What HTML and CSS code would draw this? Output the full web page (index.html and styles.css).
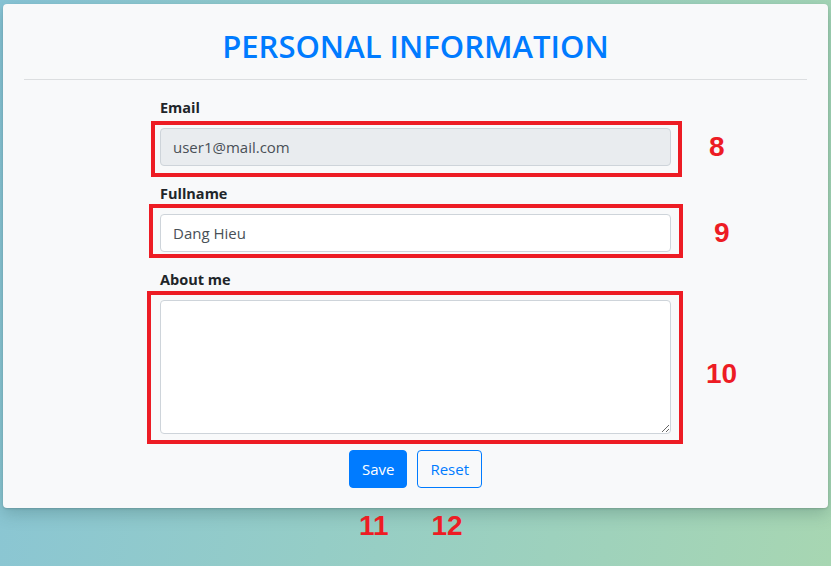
FILE: index.html
```html
<!DOCTYPE html>
<html lang="en">
<head>
<meta charset="utf-8">
<title>Personal Information</title>
<link rel="stylesheet" href="styles.css">
</head>
<body>
<div class="card">
  <h2 class="title">PERSONAL INFORMATION</h2>
  <hr class="divider">
  <form class="form">
    <div class="group">
      <label class="label" for="email">Email</label>
      <div class="field">
        <input id="email" class="control" type="text" value="user1@mail.com" readonly>
        <span class="mark mark-email"></span>
        <span class="num num-8">8</span>
      </div>
    </div>
    <div class="group">
      <label class="label" for="fullname">Fullname</label>
      <div class="field">
        <input id="fullname" class="control control-white" type="text" value="Dang Hieu">
        <span class="mark mark-name"></span>
        <span class="num num-9">9</span>
      </div>
    </div>
    <div class="group">
      <label class="label" for="about">About me</label>
      <div class="field">
        <textarea id="about" class="control control-white area"></textarea>
        <span class="mark mark-about"></span>
        <span class="num num-10">10</span>
      </div>
    </div>
    <div class="actions">
      <div class="btn-wrap">
        <button type="button" class="btn btn-primary">Save</button>
        <span class="num num-11">11</span>
      </div>
      <div class="btn-wrap">
        <button type="button" class="btn btn-outline">Reset</button>
        <span class="num num-12">12</span>
      </div>
    </div>
  </form>
</div>
</body>
</html>
```

FILE: styles.css
```css
* { box-sizing: border-box; }
html, body { height: 100%; }
body {
  margin: 0;
  padding: 4px 3px 0 3px;
  font-family: "Open Sans", "Noto Sans", sans-serif;
  background: linear-gradient(100deg, #88c4d6 0%, #95cdc6 45%, #a7d6b2 100%);
  overflow: hidden;
}
.card {
  width: 825px;
  background: #f8f9fa;
  border-radius: 4px;
  padding: 23px 21px 20px;
  box-shadow: 0 6px 16px rgba(40, 80, 80, 0.25), 0 1px 2px rgba(0,0,0,0.15);
}
.title {
  margin: 0;
  text-align: center;
  color: #007bff;
  font-family: "Open Sans", "Noto Sans", sans-serif;
  font-weight: 600;
  font-size: 31px;
  line-height: 38px;
}
.divider {
  border: 0;
  border-top: 1px solid #dcdee0;
  margin: 14px 0 16px;
}
.form {
  width: 511px;
  margin: 0 auto;
}
.group { margin-bottom: 16px; }
.label {
  display: block;
  font-weight: 700;
  font-size: 14.5px;
  line-height: 24px;
  color: #212529;
  margin-bottom: 8px;
}
.field { position: relative; }
.control {
  display: block;
  width: 100%;
  height: 38px;
  padding: 6px 12px;
  font-family: "Open Sans", "Noto Sans", sans-serif;
  font-size: 15px;
  color: #495057;
  background: #e9ecef;
  border: 1px solid #ced4da;
  border-radius: 4px;
  outline: none;
}
.control-white { background: #fff; }
.area { height: 134px; resize: vertical; }
.mark {
  position: absolute;
  border: 4px solid #ed1c24;
  pointer-events: none;
}
.mark-email { top: -7px; left: -9px; right: -11px; bottom: -11px; }
.mark-name { top: -10px; left: -11px; right: -12px; bottom: -6px; }
.mark-about { top: -9px; left: -13px; right: -12px; bottom: -10px; }
.num {
  position: absolute;
  color: #ed1c24;
  font-family: "Liberation Sans", Arial, sans-serif;
  font-weight: 700;
  font-size: 28px;
  line-height: 28px;
}
.num-8 { left: 549px; top: 5px; }
.num-9 { left: 554px; top: 5px; }
.num-10 { left: 546px; top: 60px; }
.actions {
  display: flex;
  justify-content: center;
  gap: 10px;
}
.btn-wrap { position: relative; }
.btn {
  display: block;
  height: 38px;
  padding: 6px 12px;
  font-family: "Open Sans", "Noto Sans", sans-serif;
  font-size: 15px;
  border-radius: 4px;
  border: 1px solid #007bff;
  cursor: pointer;
}
.btn-primary { background: #007bff; color: #fff; }
.btn-outline { background: transparent; color: #007bff; }
.num-11 { left: 10px; top: 62px; }
.num-12 { left: 14px; top: 62px; }
```
